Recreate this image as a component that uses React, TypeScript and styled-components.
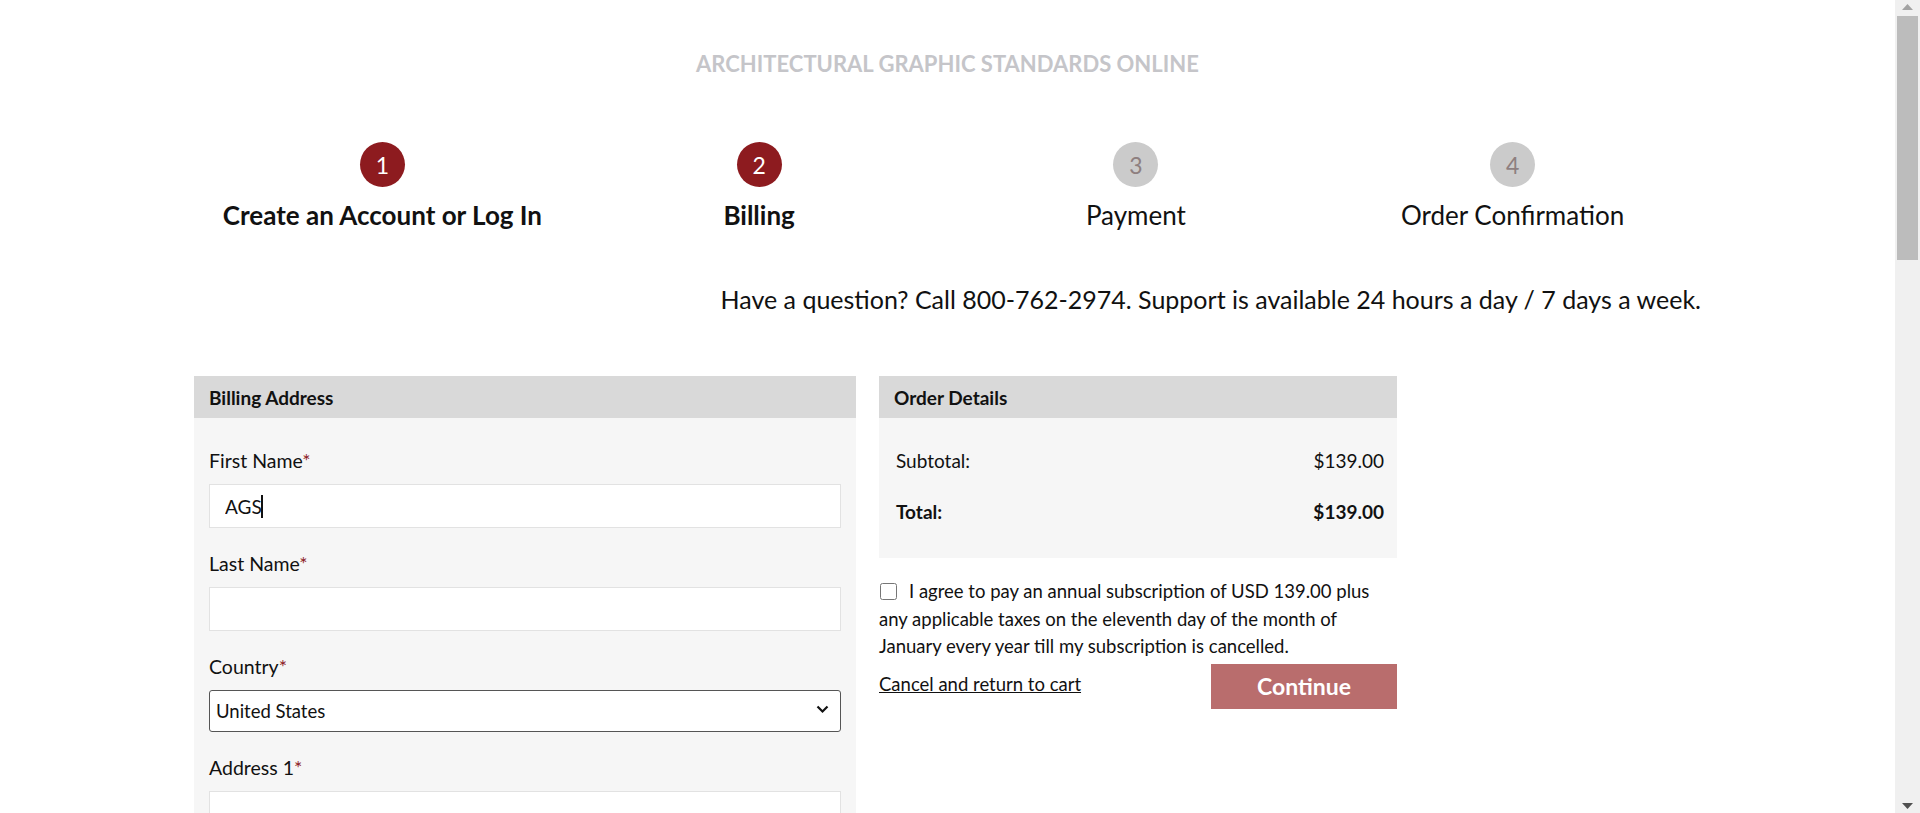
import React, { useState } from 'react';
import styled, { createGlobalStyle } from 'styled-components';

const GlobalStyle = createGlobalStyle`
  body {
    margin: 0;
    padding-right: 25px;
    background: #ffffff;
    color: #111111;
    font-family: Lato, "Open Sans", Arial, sans-serif;
  }
  * { box-sizing: border-box; }
`;

// the reference shows a classic 25px browser scrollbar on the right
const ScrollTrack = styled.div`
  position: fixed;
  top: 0;
  right: 0;
  width: 25px;
  height: 100vh;
  background: #f0f0f0;
`;

const ScrollThumb = styled.div`
  position: absolute;
  top: 16px;
  left: 2px;
  width: 21px;
  height: 244px;
  background: #bcbcbc;
`;

const ScrollArrow = styled.svg<{ down?: boolean }>`
  position: absolute;
  left: 7px;
  ${(p) => (p.down ? 'bottom: 4px;' : 'top: 4px;')}
`;

const Page = styled.div`
  width: 1507px;
  margin: 0 auto;
  padding-bottom: 200px;
`;

const SiteTitle = styled.div`
  text-align: center;
  padding-top: 52px;
  font-size: 22px;
  font-weight: 700;
  color: #c5c5c9;
  line-height: 24px;
`;

const Steps = styled.div`
  display: grid;
  grid-template-columns: repeat(4, 1fr);
  margin-top: 66px;
`;

const Step = styled.div`
  display: flex;
  flex-direction: column;
  align-items: center;
`;

const StepNumber = styled.div<{ active: boolean }>`
  width: 45px;
  height: 45px;
  border-radius: 50%;
  display: flex;
  align-items: center;
  justify-content: center;
  font-size: 23px;
  background: ${(p) => (p.active ? '#8d1b1f' : '#cbcbcb')};
  color: ${(p) => (p.active ? '#ffffff' : '#8e7f7f')};
`;

const StepLabel = styled.div<{ active: boolean }>`
  margin-top: 13px;
  font-size: 26px;
  line-height: 30px;
  font-weight: ${(p) => (p.active ? 700 : 400)};
`;

const SupportNote = styled.div`
  margin-top: 54px;
  text-align: right;
  font-size: 25px;
  line-height: 30px;
`;

const Columns = styled.div`
  display: flex;
  align-items: flex-start;
  gap: 23px;
  margin-top: 62px;
`;

const Panel = styled.div<{ width: number }>`
  width: ${(p) => p.width}px;
`;

const PanelHeader = styled.div`
  background: #d9d9d9;
  height: 42px;
  padding: 0 15px;
  display: flex;
  align-items: center;
  font-size: 19px;
  font-weight: 700;
`;

const PanelBody = styled.div`
  background: #f6f6f6;
  padding: 31px 15px 10px;
`;

const Field = styled.div`
  margin-bottom: 24px;
`;

const Label = styled.label`
  display: block;
  font-size: 19.5px;
  line-height: 24px;
  margin-bottom: 11px;
`;

const Required = styled.span`
  color: #8d1b1f;
`;

const InputWrap = styled.div`
  position: relative;
`;

const TextInput = styled.input`
  display: block;
  width: 100%;
  height: 44px;
  border: 1px solid #e2e2e2;
  background: #ffffff;
  padding: 0 15px;
  font-family: inherit;
  font-size: 19px;
  color: #111;
  outline: none;
  caret-color: #111;
`;

// the text caret seen in the focused first name field
const Caret = styled.span<{ left: number }>`
  position: absolute;
  top: 11px;
  left: ${(p) => p.left}px;
  width: 2px;
  height: 23px;
  background: #111;
`;

const SelectWrap = styled.div`
  position: relative;
`;

const Select = styled.select`
  display: block;
  width: 100%;
  height: 42px;
  border: 1px solid #555;
  border-radius: 3px;
  background: #ffffff;
  padding: 0 6px;
  font-family: inherit;
  font-size: 18.5px;
  color: #111;
  appearance: none;
`;

const Chevron = styled.svg`
  position: absolute;
  right: 12px;
  top: 15px;
  pointer-events: none;
`;

const SummaryBody = styled.div`
  background: #f6f6f6;
  padding: 31px 13px 34px 17px;
  display: flex;
  flex-direction: column;
  gap: 27px;
`;

const SummaryRow = styled.div<{ bold?: boolean }>`
  display: flex;
  justify-content: space-between;
  font-size: 19px;
  line-height: 24px;
  font-weight: ${(p) => (p.bold ? 700 : 400)};
`;

const Agreement = styled.label`
  display: block;
  margin-top: 20px;
  font-size: 18.5px;
  line-height: 27.5px;
`;

const Checkbox = styled.input`
  width: 17px;
  height: 17px;
  margin: 0 12px 0 1px;
  vertical-align: -2px;
`;

const Actions = styled.div`
  display: flex;
  justify-content: space-between;
  align-items: flex-start;
  margin-top: 3px;
`;

const CancelLink = styled.a`
  color: #111;
  font-size: 18.5px;
  line-height: 24px;
  margin-top: 8px;
  text-decoration: underline;
`;

const ContinueButton = styled.button`
  width: 186px;
  height: 45px;
  border: none;
  background: #b96d6d;
  color: #ffffff;
  font-family: inherit;
  font-size: 23px;
  font-weight: 700;
`;

const steps = ['Create an Account or Log In', 'Billing', 'Payment', 'Order Confirmation'];

const fields = ['Address 2', 'City', 'State', 'Zip Code', 'Phone', 'Email', 'Company'];

const App: React.FC = () => {
  const [firstName, setFirstName] = useState('AGS');
  const [agreed, setAgreed] = useState(false);

  return (
    <>
      <GlobalStyle />
      <Page>
        <SiteTitle>ARCHITECTURAL GRAPHIC STANDARDS ONLINE</SiteTitle>
        <Steps>
          {steps.map((label, i) => (
            <Step key={label}>
              <StepNumber active={i < 2}>{i + 1}</StepNumber>
              <StepLabel active={i < 2}>{label}</StepLabel>
            </Step>
          ))}
        </Steps>
        <SupportNote>
          Have a question? Call 800-762-2974. Support is available 24 hours a day / 7 days a week.
        </SupportNote>
        <Columns>
          <Panel width={662}>
            <PanelHeader>Billing Address</PanelHeader>
            <PanelBody>
              <Field>
                <Label>
                  First Name<Required>*</Required>
                </Label>
                <InputWrap>
                  <TextInput value={firstName} onChange={(e) => setFirstName(e.target.value)} />
                  {firstName === 'AGS' && <Caret left={52} />}
                </InputWrap>
              </Field>
              <Field>
                <Label>
                  Last Name<Required>*</Required>
                </Label>
                <TextInput />
              </Field>
              <Field>
                <Label>
                  Country<Required>*</Required>
                </Label>
                <SelectWrap>
                  <Select defaultValue="US">
                    <option value="US">United States</option>
                    <option value="CA">Canada</option>
                  </Select>
                  <Chevron width="13" height="9" viewBox="0 0 13 9">
                    <path d="M1.5 1.5 L6.5 6.5 L11.5 1.5" fill="none" stroke="#111" strokeWidth="2.2" />
                  </Chevron>
                </SelectWrap>
              </Field>
              <Field>
                <Label>
                  Address 1<Required>*</Required>
                </Label>
                <TextInput />
              </Field>
              {fields.map((f) => (
                <Field key={f}>
                  <Label>{f}</Label>
                  <TextInput />
                </Field>
              ))}
            </PanelBody>
          </Panel>
          <Panel width={518}>
            <PanelHeader>Order Details</PanelHeader>
            <SummaryBody>
              <SummaryRow>
                <span>Subtotal:</span>
                <span>$139.00</span>
              </SummaryRow>
              <SummaryRow bold>
                <span>Total:</span>
                <span>$139.00</span>
              </SummaryRow>
            </SummaryBody>
            <Agreement>
              <Checkbox type="checkbox" checked={agreed} onChange={(e) => setAgreed(e.target.checked)} />
              I agree to pay an annual subscription of USD 139.00 plus any applicable taxes on the
              eleventh day of the month of January every year till my subscription is cancelled.
            </Agreement>
            <Actions>
              <CancelLink href="#">Cancel and return to cart</CancelLink>
              <ContinueButton type="button">Continue</ContinueButton>
            </Actions>
          </Panel>
        </Columns>
      </Page>
      <ScrollTrack>
        <ScrollArrow width="11" height="6" viewBox="0 0 11 6">
          <path d="M0 6 L5.5 0 L11 6 Z" fill="#a3a3a3" />
        </ScrollArrow>
        <ScrollThumb />
        <ScrollArrow down width="11" height="6" viewBox="0 0 11 6">
          <path d="M0 0 L5.5 6 L11 0 Z" fill="#505050" />
        </ScrollArrow>
      </ScrollTrack>
    </>
  );
};

export default App;
